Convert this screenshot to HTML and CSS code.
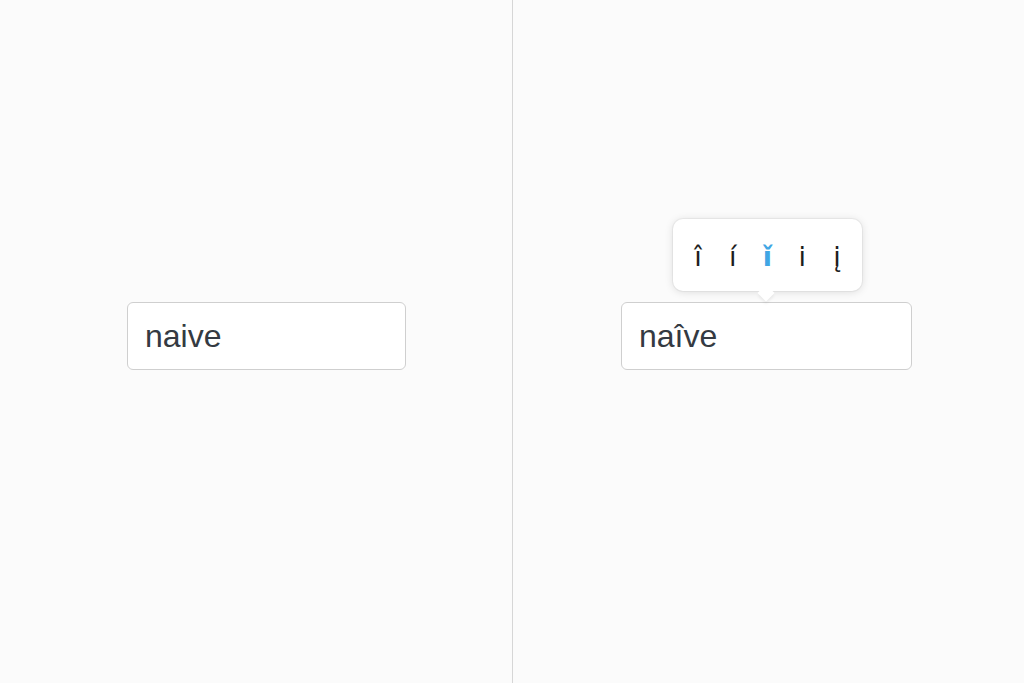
FILE: index.html
```html
<!DOCTYPE html>
<html lang="en">
<head>
<meta charset="utf-8">
<title>Accent picker</title>
<link rel="stylesheet" href="styles.css">
</head>
<body>
<main class="split">
  <section class="pane pane-left">
    <div class="field field-left"><span class="value">naive</span></div>
  </section>
  <section class="pane pane-right">
    <div class="field field-right">
      <span class="value">naîve</span>
      <div class="popover">
        <span class="opt">î</span>
        <span class="opt">í</span>
        <span class="opt opt-active">ǐ</span>
        <span class="opt">i</span>
        <span class="opt">į</span>
      </div>
    </div>
  </section>
</main>
</body>
</html>
```

FILE: styles.css
```css
html, body {
  margin: 0;
  padding: 0;
  height: 100%;
}
body {
  background: #fbfbfb;
  font-family: "Liberation Sans", Arial, sans-serif;
  color: #343a42;
}
.split {
  display: grid;
  grid-template-columns: 512px 1px 1fr;
  height: 683px;
}
.split::before {
  content: "";
  grid-column: 2;
  grid-row: 1;
  background: #d6d6d6;
}
.pane {
  display: flex;
  align-items: flex-start;
  padding-top: 302px;
}
.pane-left {
  grid-column: 1;
  grid-row: 1;
  padding-left: 127px;
}
.pane-right {
  grid-column: 3;
  grid-row: 1;
  padding-left: 108px;
}
.field {
  position: relative;
  box-sizing: border-box;
  height: 68px;
  background: #ffffff;
  border: 1px solid #cfcfcf;
  border-radius: 6px;
  display: flex;
  align-items: center;
  padding-left: 17px;
}
.field-left { width: 279px; }
.field-right { width: 291px; }
.value {
  font-size: 32px;
  line-height: 1;
}
.popover {
  position: absolute;
  left: 51px;
  top: -84px;
  width: 189px;
  height: 72px;
  box-sizing: border-box;
  background: #ffffff;
  border-radius: 10px;
  box-shadow: 0 1px 8px rgba(0,0,0,0.13), 0 0 0 1px rgba(0,0,0,0.04);
  display: flex;
  align-items: center;
  justify-content: space-between;
  padding: 2px 18px 0 18px;
}
.popover::after {
  content: "";
  position: absolute;
  left: 87px;
  bottom: -8px;
  width: 12px;
  height: 12px;
  background: #ffffff;
  transform: rotate(45deg);
  box-shadow: 2px 2px 3px rgba(0,0,0,0.06);
}
.opt {
  font-family: "DejaVu Sans", sans-serif;
  font-size: 27px;
  color: #1e1e1e;
  width: 14px;
  text-align: center;
  line-height: 1;
}
.opt-active {
  color: #41a6e4;
  font-weight: bold;
}
```
